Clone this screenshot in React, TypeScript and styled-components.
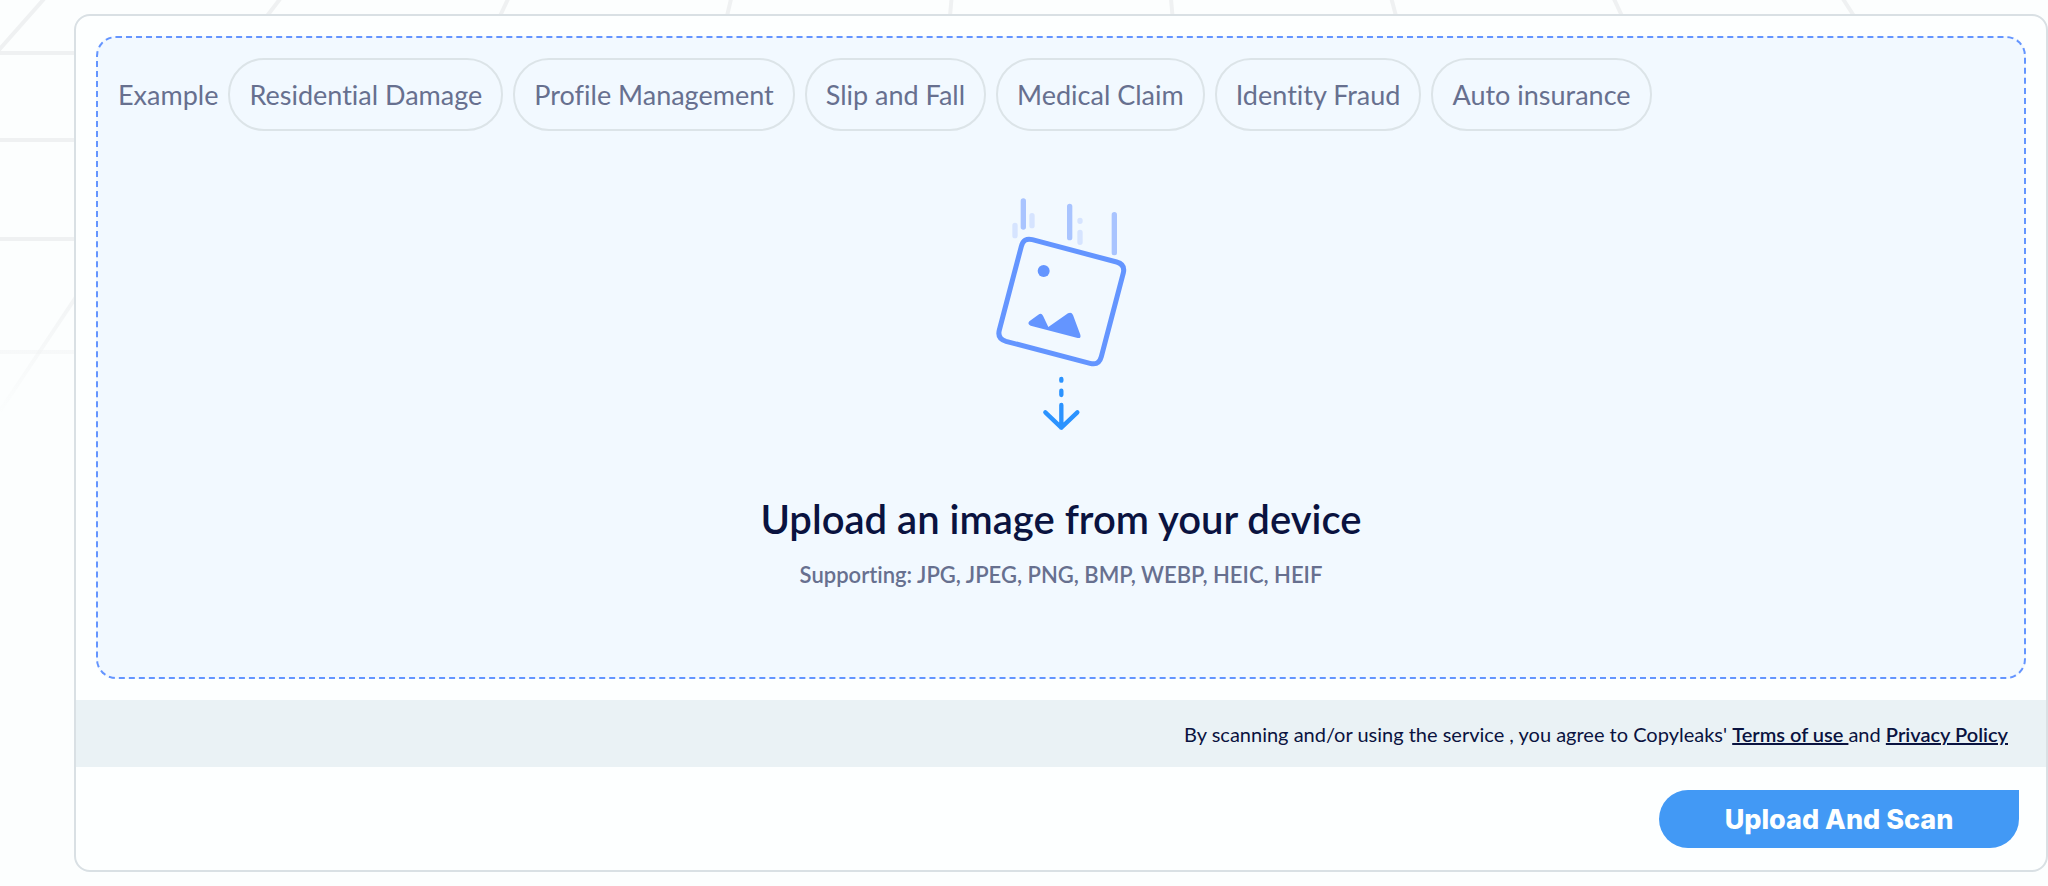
import React from 'react';
import styled, { createGlobalStyle } from 'styled-components';

const GlobalStyle = createGlobalStyle`
  *, *::before, *::after {
    box-sizing: border-box;
  }
  body {
    margin: 0;
    background: #fcfefe;
    color: #0a1340;
    font-family: Lato, "Open Sans", sans-serif;
    font-variant-ligatures: none;
  }
`;

const Page = styled.main`
  position: relative;
  padding: 14px 0 14px 74px;
  overflow: hidden;
`;

const Backdrop = styled.svg`
  position: absolute;
  top: 0;
  left: 0;
  pointer-events: none;
`;

const Card = styled.section`
  position: relative;
  background: #fdffff;
  border: 2px solid #d9e0e4;
  border-radius: 16px;
`;

const DropZone = styled.div`
  display: flex;
  flex-direction: column;
  margin: 20px 20px 21px;
  padding: 20px 20px 89px;
  background: #f2f9ff;
  border: 2px dashed #6495ff;
  border-radius: 20px;
`;

const Examples = styled.div`
  display: flex;
  flex-wrap: wrap;
  align-items: center;
  gap: 10px;
  color: #67708f;
  font-size: 27px;
  line-height: 33px;
`;

const Pill = styled.button`
  padding: 18px 19px;
  background: transparent;
  border: 2px solid #dce4e8;
  border-radius: 36px;
  color: inherit;
  font: inherit;
  cursor: pointer;
`;

const Prompt = styled.div`
  display: flex;
  flex-direction: column;
  align-items: center;
  padding-top: 49px;
  text-align: center;
`;

const Title = styled.h2`
  margin: 55px 0 19px;
  font-size: 40px;
  font-weight: 600;
  line-height: 48px;
`;

const Formats = styled.p`
  margin: 0;
  color: #67708f;
  font-size: 22px;
  font-weight: 600;
  line-height: 26px;
`;

const Legal = styled.p`
  margin: 0;
  padding: 22px 38px 21px 20px;
  background: #eaf2f5;
  font-size: 20px;
  line-height: 24px;
  text-align: right;
`;

const LegalLink = styled.a`
  color: inherit;
  font-weight: 600;
  text-decoration: underline;
  text-decoration-thickness: 2px;
  white-space: pre-wrap;
`;

const Actions = styled.div`
  display: flex;
  justify-content: flex-end;
  padding: 23px 27px 22px;
`;

const ScanButton = styled.button`
  min-width: 360px;
  padding: 13px 24px 11px;
  background: #4299f5;
  border: 0;
  border-radius: 29px 0 29px 29px;
  color: #fdffff;
  font-family: Inter, sans-serif;
  font-size: 27px;
  font-weight: 800;
  line-height: 34px;
  cursor: pointer;
`;

const examples = [
  'Residential Damage',
  'Profile Management',
  'Slip and Fall',
  'Medical Claim',
  'Identity Fraud',
  'Auto insurance',
];

function PerspectiveGrid() {
  return (
    <Backdrop width="2048" height="420" viewBox="0 0 2048 420" fill="none" aria-hidden="true">
      <defs>
        <linearGradient id="fade" gradientUnits="userSpaceOnUse" x1="0" y1="250" x2="0" y2="420">
          <stop offset="0" stopColor="#eff1f2" />
          <stop offset="1" stopColor="#eff1f2" stopOpacity="0" />
        </linearGradient>
      </defs>
      <g stroke="url(#fade)" strokeWidth="4">
        <path d="M0 53H80M0 140H80M0 239H80M0 352H80" />
        <path d="M-2 51 44 -1M267 16 280 -1M500 16 508 -1M727 16 731 -1M950 16 951.5 -1M1172.5 16 1171 -1M1396 16 1391.5 -1M1622 16 1614 -1M1854 16 1843 -1" />
        <path d="M0 411 78 294" />
      </g>
    </Backdrop>
  );
}

function FallingImage() {
  return (
    <svg width="170" height="260" viewBox="-13 0 510 780" fill="none" aria-hidden="true">
      <g strokeWidth="16" strokeLinecap="round">
        <path stroke="#a9c4ff" d="M129 63V141M268 79V173M402 104V218" />
        <path stroke="#d6e4ff" d="M104 136V167M155 107V137M299 157V187M299 121V124" />
      </g>
      <path
        stroke="#6495ff"
        strokeWidth="15"
        d="M156 179 409 246Q435 253 429 279L363 530Q356 557 329 550L77 484Q50 476 57 450L123 199Q130 172 156 179Z"
      />
      <circle cx="190" cy="273" r="18" fill="#6495ff" />
      <path
        fill="#6495ff"
        d="M147 424 174 404Q183 398 188 407L204 441 263 400Q273 394 278 405L300 464Q303 476 292 474L151 437Q140 432 147 424Z"
      />
      <g stroke="#2b93ff" strokeWidth="13" strokeLinecap="round" strokeLinejoin="round">
        <path d="M243 597V602M243 632V645M243 675V743M195 697 243 743 291 697" />
      </g>
    </svg>
  );
}

export default function App() {
  return (
    <>
      <GlobalStyle />
      <Page>
        <PerspectiveGrid />
        <Card>
          <DropZone>
            <Examples>
              <span>Example</span>
              {examples.map((name) => (
                <Pill key={name} type="button">{name}</Pill>
              ))}
            </Examples>
            <Prompt>
              <FallingImage />
              <Title>Upload an image from your device</Title>
              <Formats>Supporting: JPG, JPEG, PNG, BMP, WEBP, HEIC, HEIF</Formats>
            </Prompt>
          </DropZone>
          <Legal>
            By scanning and/or using the service , you agree to Copyleaks'{' '}
            <LegalLink href="#terms">{'Terms of use '}</LegalLink>and{' '}
            <LegalLink href="#privacy">Privacy Policy</LegalLink>
          </Legal>
          <Actions>
            <ScanButton type="button">Upload And Scan</ScanButton>
          </Actions>
        </Card>
      </Page>
    </>
  );
}
